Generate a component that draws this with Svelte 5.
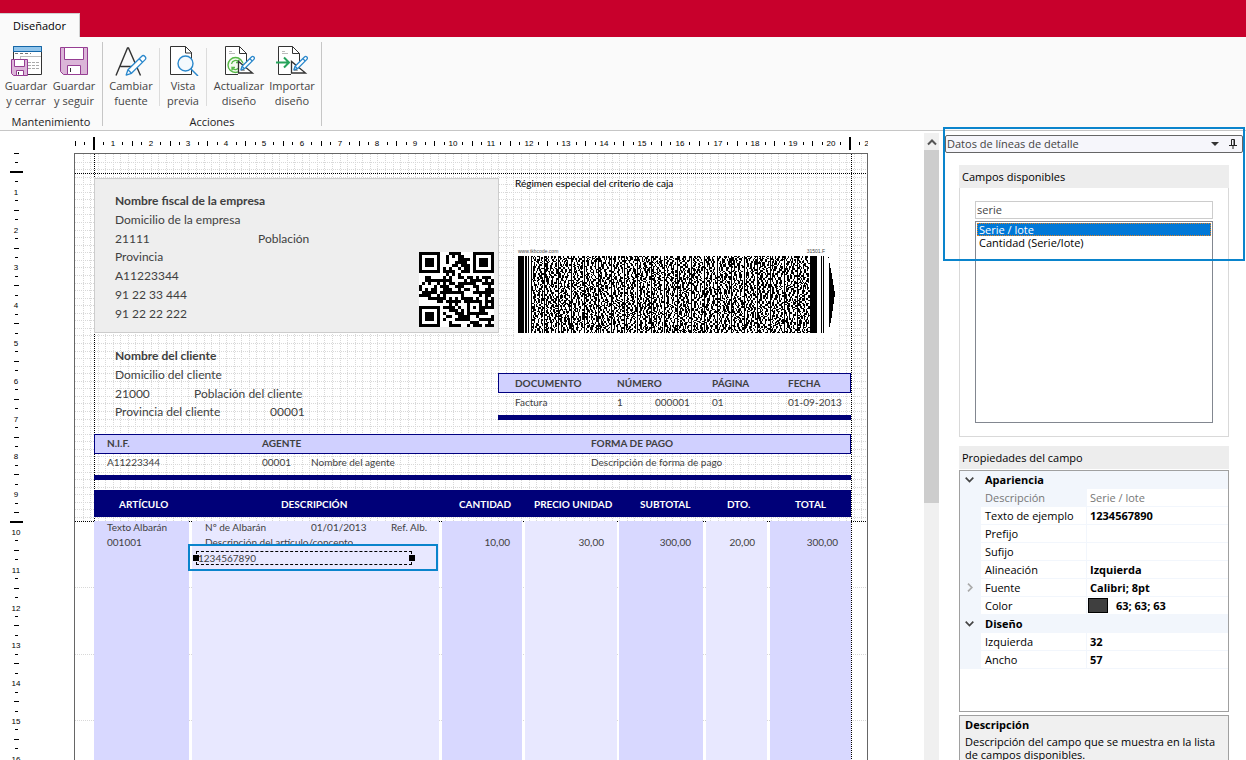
<script>
	const CM = 37.8;

	let section = $state('Datos de líneas de detalle');
	let search = $state('serie');
	let selected = $state(0);

	const available = ['Serie / lote', 'Cantidad (Serie/lote)'];

	const properties = [
		{ category: 'Apariencia' },
		{ name: 'Descripción', value: 'Serie / lote', readonly: true },
		{ name: 'Texto de ejemplo', value: '1234567890' },
		{ name: 'Prefijo', value: '' },
		{ name: 'Sufijo', value: '' },
		{ name: 'Alineación', value: 'Izquierda' },
		{ name: 'Fuente', value: 'Calibri; 8pt', expandable: true },
		{ name: 'Color', value: '63; 63; 63', color: 'rgb(63, 63, 63)' },
		{ category: 'Diseño' },
		{ name: 'Izquierda', value: '32' },
		{ name: 'Ancho', value: '57' }
	];

	// elementos del documento, en coordenadas de la hoja
	const shapes = [
		{ kind: 'box', x: 19, y: 24, w: 405, h: 155 },
		{ kind: 'band', x: 423, y: 219, w: 353, h: 20 },
		{ kind: 'bar', x: 423, y: 261, w: 353, h: 5 },
		{ kind: 'band', x: 19, y: 280, w: 757, h: 20 },
		{ kind: 'bar', x: 19, y: 321, w: 757, h: 5 },
		{ kind: 'bar', x: 19, y: 336, w: 757, h: 27 },
		{ kind: 'dark', x: 19, y: 367, w: 95, h: 600 },
		{ kind: 'light', x: 117, y: 367, w: 247, h: 600 },
		{ kind: 'dark', x: 367, y: 367, w: 80, h: 600 },
		{ kind: 'light', x: 450, y: 367, w: 92, h: 600 },
		{ kind: 'dark', x: 544, y: 367, w: 84, h: 600 },
		{ kind: 'light', x: 631, y: 367, w: 61, h: 600 },
		{ kind: 'dark', x: 695, y: 367, w: 81, h: 600 }
	];

	const fields = [
		{ x: 40, y: 39, text: 'Nombre fiscal de la empresa', kind: 'large strong' },
		{ x: 40, y: 58, text: 'Domicilio de la empresa', kind: 'large' },
		{ x: 40, y: 77, text: '21111', kind: 'large' },
		{ x: 183, y: 77, text: 'Población', kind: 'large' },
		{ x: 40, y: 95, text: 'Provincia', kind: 'large' },
		{ x: 40, y: 114, text: 'A11223344', kind: 'large' },
		{ x: 40, y: 133, text: '91 22 33 444', kind: 'large' },
		{ x: 40, y: 152, text: '91 22 22 222', kind: 'large' },
		{ x: 440, y: 21, text: 'Régimen especial del criterio de caja', kind: 'black' },
		{ x: 40, y: 194, text: 'Nombre del cliente', kind: 'large strong' },
		{ x: 40, y: 213, text: 'Domicilio del cliente', kind: 'large' },
		{ x: 40, y: 232, text: '21000', kind: 'large' },
		{ x: 119, y: 232, text: 'Población del cliente', kind: 'large' },
		{ x: 40, y: 250, text: 'Provincia del cliente', kind: 'large' },
		{ x: 195, y: 250, text: '00001', kind: 'large' },
		{ x: 440, y: 221, text: 'DOCUMENTO', kind: 'strong' },
		{ x: 542, y: 221, text: 'NÚMERO', kind: 'strong' },
		{ x: 637, y: 221, text: 'PÁGINA', kind: 'strong' },
		{ x: 713, y: 221, text: 'FECHA', kind: 'strong' },
		{ x: 440, y: 240, text: 'Factura' },
		{ x: 542, y: 240, text: '1' },
		{ x: 580, y: 240, text: '000001' },
		{ x: 637, y: 240, text: '01' },
		{ x: 713, y: 240, text: '01-09-2013' },
		{ x: 32, y: 281, text: 'N.I.F.', kind: 'strong' },
		{ x: 187, y: 281, text: 'AGENTE', kind: 'strong' },
		{ x: 516, y: 281, text: 'FORMA DE PAGO', kind: 'strong' },
		{ x: 32, y: 300, text: 'A11223344' },
		{ x: 187, y: 300, text: '00001' },
		{ x: 236, y: 300, text: 'Nombre del agente' },
		{ x: 516, y: 300, text: 'Descripción de forma de pago' },
		{ x: 44, y: 342, text: 'ARTÍCULO', kind: 'strong white' },
		{ x: 206, y: 342, text: 'DESCRIPCIÓN', kind: 'strong white' },
		{ x: 384, y: 342, text: 'CANTIDAD', kind: 'strong white' },
		{ x: 459, y: 342, text: 'PRECIO UNIDAD', kind: 'strong white' },
		{ x: 565, y: 342, text: 'SUBTOTAL', kind: 'strong white' },
		{ x: 652, y: 342, text: 'DTO.', kind: 'strong white' },
		{ x: 720, y: 342, text: 'TOTAL', kind: 'strong white' },
		{ x: 32, y: 365, text: 'Texto Albarán' },
		{ x: 32, y: 380, text: '001001' },
		{ x: 130, y: 365, text: 'Nº de Albarán' },
		{ x: 236, y: 365, text: '01/01/2013' },
		{ x: 316, y: 365, text: 'Ref. Alb.' },
		{ x: 130, y: 380, text: 'Descripción del artículo/concepto', kind: 'cut' },
		{ x: 375, y: 380, w: 60, text: '10,00' },
		{ x: 469, y: 380, w: 60, text: '30,00' },
		{ x: 556, y: 380, w: 60, text: '300,00' },
		{ x: 620, y: 380, w: 60, text: '20,00' },
		{ x: 703, y: 380, w: 60, text: '300,00' }
	];

	// reglas: una marca cada cuarto de centímetro, número en cada entero
	function ruler(count, margins) {
		const marks = [];
		for (let i = 0; i <= count; i++) {
			const pos = Math.round((i * CM) / 4);
			if (margins.includes(i)) marks.push({ pos, type: 'margin' });
			else if (i % 4 === 0 && i > 0) marks.push({ pos, type: 'label', label: i / 4 });
			else marks.push({ pos, type: i % 2 ? 'short' : 'tall' });
		}
		return marks;
	}
	const across = ruler(84, [2, 82]);
	const down = ruler(66, [2, 39]);
	const half = { short: 1, tall: 2, margin: 6 };

	const gridX = Array.from({ length: 104 }, (_, i) => Math.round((i + 1) * 7.56));
	const gridY = Array.from({ length: 48 }, (_, i) => Math.round((i + 1) * 7.56));
	const bandY = [433, 500, 566];

	// mulberry32
	function random(seed) {
		return () => {
			seed = (seed + 0x6d2b79f5) | 0;
			let t = Math.imul(seed ^ (seed >>> 15), 1 | seed);
			t = (t + Math.imul(t ^ (t >>> 7), 61 | t)) ^ t;
			return ((t ^ (t >>> 14)) >>> 0) / 4294967296;
		};
	}

	function qrPath() {
		const rnd = random(77);
		const finder = (r, c) => {
			const ring = Math.max(Math.abs(r - 3), Math.abs(c - 3));
			return ring === 3 || ring < 2;
		};
		let d = '';
		for (let r = 0; r < 25; r++) {
			for (let c = 0; c < 25; c++) {
				let on = rnd() > 0.47;
				if (r < 8 && c < 8) on = finder(r, c);
				else if (r < 8 && c > 16) on = finder(r, c - 18);
				else if (r > 16 && c < 8) on = finder(r - 18, c);
				else if (r > 15 && r < 21 && c > 15 && c < 21) {
					on = Math.max(Math.abs(r - 18), Math.abs(c - 18)) !== 1;
				}
				if (on) d += `M${c} ${r}h1v1h-1z`;
			}
		}
		return d;
	}

	function barcodePath() {
		const rnd = random(1501);
		let d = 'M0 0h6v77h-6zM7 0h2v77h-2zM10 0h1v77h-1zM292 0h7v77h-7zM303 0h1v77h-1zM305 0h1v77h-1z';
		for (let i = 0; i < 21; i++) {
			const col = 13 + Math.round(i * 13.3);
			const next = 13 + Math.round((i + 1) * 13.3);
			d += `M${col} 0h1v77h-1z`;
			for (let y = 0; y < 77; y++) {
				let x = col + 1 + Math.floor(rnd() * 3);
				const h = rnd() > 0.5 && y < 76 ? 2 : 1;
				while (x < next - 1) {
					const w = Math.min(1 + Math.floor(rnd() * 2.6), next - x);
					d += `M${x} ${y}h${w}v${h}h-${w}z`;
					x += w + 1 + Math.floor(rnd() * 3);
				}
				y += h - 1;
			}
		}
		return d;
	}
</script>

{#snippet pencil(x, y, size)}
	<g transform="translate({x} {y}) scale({size})" fill="#fff" stroke="#2b88cc" stroke-width={1.3 / size} stroke-linejoin="round">
		<path d="M2.500 12.500 14 1.200a2 2 0 0 1 2.900 2.900L5.500 15.500 1 17z" />
		<path d="M12 3.200l2.900 2.900M2.500 12.500l3 3" />
	</g>
{/snippet}

{#snippet sheet()}
	<path d="M2.500 2.500h14l7 7v21h-21z" fill="#fff" stroke="#333" />
	<path d="M16.500 2.500v7h7" fill="none" stroke="#333" />
{/snippet}

{#snippet square()}
	<path d="M15 17h2l14 12v3H15z" fill="#fafafa" />
	<path d="M15.500 17.500v11.500h14z" fill="#fff" stroke="#333" stroke-width="1.300" />
	<path d="M18 23v3.500h4z" fill="#333" />
	{@render pencil(17, 12, 0.82)}
{/snippet}

<div class="app">
	<header>
		<button class="tab">Diseñador</button>
	</header>

	<div class="ribbon">
		<section class="group">
			<div class="tools">
				<button class="tool">
					<svg width="32" height="32" viewBox="0 0 32 32">
						<path d="M3.500 2.500h28v28h-28z" fill="#fff" stroke="#333" />
						<path d="M3.500 2.500h28v5h-28z" fill="#92c5eb" stroke="#1467a8" />
						<path d="M10 12.500h21M10.500 13v3" stroke="#bbb" />
						<path d="M5 9.500h16" stroke="#777" stroke-dasharray="3 2" />
						<path d="M18 18.500h12M18 21.500h12M18 24.500h12" stroke="#aaa" stroke-dasharray="3 1" />
						<path d="M1.500 15.500h16v16h-14l-2-2z" fill="#dbb5d8" stroke="#963e93" />
						<path d="M4.500 15.500h10v7h-10zM6.500 26.500h7v5h-7z" fill="#fff" stroke="#963e93" />
						<path d="M8.500 28v2.500" stroke="#333" />
					</svg>
					<span>Guardar</span><span>y cerrar</span>
				</button>
				<button class="tool">
					<svg width="32" height="32" viewBox="0 0 32 32">
						<path d="M2.500 3.500h27v27h-24l-3-3z" fill="#dbb5d8" stroke="#963e93" />
						<path d="M6.500 3.500h19v12h-19zM9.500 21.500h13v9h-13z" fill="#fff" stroke="#963e93" />
						<path d="M12.500 24v4" stroke="#333" />
					</svg>
					<span>Guardar</span><span>y seguir</span>
				</button>
			</div>
			<h2>Mantenimiento</h2>
		</section>
		<section class="group wide">
			<div class="tools">
				<button class="tool">
					<svg width="32" height="32" viewBox="0 0 32 32">
						<path d="M1 31.500 12.500 4h1L25.500 31.500M5.500 22.500h16" fill="none" stroke="#333" stroke-width="1.400" />
						{@render pencil(10, 11, 1.18)}
					</svg>
					<span>Cambiar</span><span>fuente</span>
				</button>
				<i class="line"></i>
				<button class="tool narrow">
					<svg width="32" height="32" viewBox="0 0 32 32">
						<path d="M3.500 2.500h15l6 6v22h-21z" fill="#fff" stroke="#333" />
						<path d="M18.500 2.500v6.500h6.500" fill="none" stroke="#333" />
						<circle cx="18.500" cy="19.500" r="7.500" fill="#f4f9fd" stroke="#2b88cc" stroke-width="1.400" />
						<path d="M24 25l7 7" stroke="#2b88cc" stroke-width="1.500" />
					</svg>
					<span>Vista</span><span>previa</span>
				</button>
				<i class="line"></i>
				<button class="tool big">
					<svg width="32" height="32" viewBox="0 0 32 32">
						{@render sheet()}
						<path d="M6 7.500h3M6 9.500h6" stroke="#bbb" />
						<circle cx="12.500" cy="21" r="7.500" fill="#f3faef" stroke="#57b947" stroke-width="1.400" />
						<path d="M8.500 20a4.300 4.300 0 0 1 7.500-2v-2.500m0 3h-3M16.500 22a4.300 4.300 0 0 1-7.500 2v2.500m0-3h3" fill="none" stroke="#57b947" stroke-width="1.300" />
						{@render square()}
					</svg>
					<span>Actualizar</span><span>diseño</span>
				</button>
				<button class="tool">
					<svg width="32" height="32" viewBox="0 0 32 32">
						{@render sheet()}
						<path d="M6 7.500h3M6 9.500h6" stroke="#bbb" />
						<path d="M0 18.500h13M8 13.500l5 5-5 5" fill="none" stroke="#27a35b" stroke-width="2" />
						{@render square()}
					</svg>
					<span>Importar</span><span>diseño</span>
				</button>
			</div>
			<h2>Acciones</h2>
		</section>
	</div>

	<main>
		<div class="designer">
			<svg class="hruler" height="22">
				{#each across as m}
					{#if m.type === 'label'}
						<text x={m.pos + 1} y="15">{m.label}</text>
					{:else}
						<line x1={m.pos + 1} x2={m.pos + 1} y1={12 - half[m.type]} y2={12 + half[m.type] + 1} class:thick={m.type === 'margin'} />
					{/if}
				{/each}
			</svg>
			<svg class="vruler" width="74">
				{#each down as m}
					{#if m.type === 'label'}
						<text x="16" y={m.pos + 4}>{m.label}</text>
					{:else}
						<line x1={16 - half[m.type]} x2={17 + half[m.type]} y1={m.pos} y2={m.pos} class:thick={m.type === 'margin'} />
					{/if}
				{/each}
			</svg>

			<div class="sheet">
				<svg class="grid" width="792" height="1000">
					{#each gridX as x}
						<line x1={x} x2={x} y1="0" y2="367" />
					{/each}
					{#each gridY as y}
						<line x1="0" x2="792" y1={y} y2={y} />
					{/each}
					{#each bandY as y}
						<line x1="0" x2="792" y1={y} y2={y} />
					{/each}
					<g class="guides">
						<line x1="0" x2="792" y1="19" y2="19" />
						<line x1="0" x2="792" y1="367" y2="367" />
						<line x1="19" x2="19" y1="0" y2="367" />
					</g>
				</svg>

				{#each shapes as s}
					<div class="shape {s.kind}" style="left:{s.x}px; top:{s.y}px; width:{s.w}px; height:{s.h}px"></div>
				{/each}

				<svg class="grid" width="792" height="1000">
					<g class="guides"><line x1="776" x2="776" y1="0" y2="1000" /></g>
				</svg>

				<svg class="qr" width="75" height="75" viewBox="0 0 25 25"><path d={qrPath()} /></svg>

				<div class="barcode">
					<div class="captions"><span>www.tkbcode.com</span><span>31501.F</span></div>
					<svg width="320" height="77" viewBox="0 0 320 77">
						<path d={barcodePath()} />
						<path d="M311 7h1v5h1v5h1v6h1v6h1v6h1v6h-1v7h-1v7h-1v7h-1v5h-1v4h-1zM310 1h1v1h-1z" />
					</svg>
				</div>

				{#each fields as f}
					<div class="field {f.kind ?? ''}" class:right={f.w} style="left:{f.x}px; top:{f.y}px; width:{f.w ? f.w + 'px' : 'auto'}">{f.text}</div>
				{/each}

				<div class="highlight">
					<div class="selection">1234567890</div>
				</div>
			</div>
		</div>

		<div class="scrollbar">
			<button aria-label="Subir">
				<svg width="10" height="8" viewBox="0 0 10 8"><path d="M1 6.500l4-4 4 4" fill="none" stroke="#555" stroke-width="2" /></svg>
			</button>
			<div class="thumb"></div>
		</div>

		<aside>
			<div class="dock">
				<select bind:value={section} aria-label="Sección">
					<option>Datos de líneas de detalle</option>
				</select>
				<svg width="8" height="4" viewBox="0 0 8 4"><path d="M0 0h8l-4 4z" fill="#333" /></svg>
				<button aria-label="Fijar panel">
					<svg width="8" height="10" viewBox="0 0 8 10"><path d="M2.500 6V.5h3V6M5 1v5M0 6.500h8M4 7v3" fill="none" stroke="#222" /></svg>
				</button>
			</div>

			<h3>Campos disponibles</h3>
			<div class="frame">
				<input type="text" bind:value={search} aria-label="Buscar campo" />
				<ul role="listbox" aria-label="Campos disponibles">
					{#each available as name, i}
						<li role="none">
							<button role="option" aria-selected={selected === i} class:active={selected === i} onclick={() => (selected = i)}>{name}</button>
						</li>
					{/each}
				</ul>
			</div>

			<h3 class="second">Propiedades del campo</h3>
			<div class="props">
				<table>
					<colgroup>
						<col class="gutter" />
						<col class="name" />
						<col />
					</colgroup>
					<tbody>
						{#each properties as p}
							{#if p.category}
								<tr class="category">
									<td><button aria-label="Contraer"><svg width="9" height="6" viewBox="0 0 9 6"><path d="M.7.7l3.800 3.800L8.300.7" fill="none" stroke="#444" stroke-width="1.700" /></svg></button></td>
									<th colspan="2">{p.category}</th>
								</tr>
							{:else}
								<tr class:readonly={p.readonly}>
									<td>
										{#if p.expandable}
											<button aria-label="Expandir"><svg width="6" height="9" viewBox="0 0 6 9"><path d="M1 .7l3.800 3.800L1 8.300" fill="none" stroke="#aaa" stroke-width="1.700" /></svg></button>
										{/if}
									</td>
									<th>{p.name}</th>
									<td>
										<span class="value">
											{#if p.color}<i style="background:{p.color}"></i>{/if}{p.value}
										</span>
									</td>
								</tr>
							{/if}
						{/each}
					</tbody>
				</table>
			</div>

			<div class="help">
				<strong>Descripción</strong>
				<p>Descripción del campo que se muestra en la lista de campos disponibles.</p>
			</div>

			<div class="callout"></div>
		</aside>
	</main>
</div>

<style>
	:global(body) {
		margin: 0;
		background: #fff;
	}

	.app {
		display: flex;
		flex-direction: column;
		height: 100vh;
		overflow: hidden;
		font-family: 'Open Sans', sans-serif;
		font-size: 11px;
		line-height: 15px;
		color: #000;
	}

	button {
		margin: 0;
		padding: 0;
		border: 0;
		background: none;
		font: inherit;
		color: inherit;
	}

	h2, h3, p, ul {
		margin: 0;
		padding: 0;
		font-size: inherit;
		font-weight: normal;
	}

	svg {
		display: block;
		flex: none;
	}

	header {
		display: flex;
		align-items: flex-end;
		height: 37px;
		background: #c8002c;
	}

	.tab {
		width: 80px;
		height: 24px;
		background: #fafafa;
		border-top: 1px solid #d0d0d0;
		border-right: 1px solid #d0d0d0;
	}

	.ribbon {
		display: flex;
		height: 88px;
		padding-top: 5px;
		background: #fafafa;
		border-bottom: 1px solid #c6c6c6;
	}

	.group {
		display: flex;
		flex-direction: column;
		width: 102px;
		height: 84px;
		border-right: 1px solid #c6c6c6;
	}

	.group.wide {
		width: 218px;
	}

	.group h2 {
		margin-top: 6px;
		text-align: center;
		color: #222;
	}

	.tools {
		display: flex;
		padding: 2px 0 0 2px;
	}

	.wide .tools {
		padding-left: 0;
	}

	.tool {
		display: flex;
		flex-direction: column;
		align-items: center;
		width: 48px;
		color: #444;
	}

	.tool svg {
		margin-bottom: 2px;
	}

	.wide .tool {
		width: 56px;
	}

	.wide .tool.narrow {
		width: 46px;
	}

	.wide .tool.big {
		width: 64px;
	}

	.wide .tool:last-child {
		width: 42px;
	}

	.line {
		width: 1px;
		height: 58px;
		margin-top: 4px;
		background: #dcdcdc;
	}

	main {
		flex: 1;
		display: flex;
		min-height: 0;
	}

	.designer {
		flex: 1;
		display: grid;
		grid-template-columns: 74px 794px;
		grid-template-rows: 22px 1fr;
		min-width: 0;
		overflow: hidden;
	}

	.hruler {
		grid-column: 2;
		width: 100%;
	}

	.vruler {
		height: 100%;
	}

	.hruler text, .vruler text {
		font-family: 'Liberation Sans', sans-serif;
		font-size: 8px;
		text-anchor: middle;
	}

	.hruler line, .vruler line {
		stroke: #000;
		stroke-width: 1;
		shape-rendering: crispEdges;
	}

	.hruler .thick, .vruler .thick {
		stroke-width: 2;
	}

	.sheet {
		position: relative;
		overflow: hidden;
		border: 1px solid #666;
		border-bottom: 0;
		font-family: Lato, sans-serif;
		font-size: 10px;
	}

	.grid {
		position: absolute;
		left: 0;
		top: 0;
	}

	.grid line {
		stroke: #d8d8d8;
		stroke-dasharray: 1 1;
		shape-rendering: crispEdges;
	}

	.grid .guides line {
		stroke: #000;
	}

	.shape {
		position: absolute;
		box-sizing: border-box;
	}

	.box {
		background: #eee;
		border: 1px solid #ccc;
	}

	.band {
		background: #d0d0ff;
		border: 1px solid #000080;
	}

	.bar {
		background: #000078;
	}

	.dark {
		background: #d8d8ff;
	}

	.light {
		background: #e8e8ff;
	}

	.qr {
		position: absolute;
		left: 344px;
		top: 98px;
		background: #fff;
		shape-rendering: crispEdges;
	}

	.barcode {
		position: absolute;
		left: 440px;
		top: 91px;
		padding: 2px 0 4px 3px;
		background: #fff;
		shape-rendering: crispEdges;
	}

	.captions {
		display: flex;
		justify-content: space-between;
		width: 307px;
		font: 5px/9px 'Liberation Sans', sans-serif;
		color: #444;
	}

	.field {
		position: absolute;
		line-height: 16px;
		white-space: nowrap;
		color: #3f3f3f;
	}

	.large {
		font-size: 12px;
	}

	.strong {
		font-weight: bold;
	}

	.black {
		color: #000;
	}

	.white {
		color: #fff;
	}

	.right {
		text-align: right;
	}

	.cut {
		height: 11px;
		overflow: hidden;
	}

	.highlight {
		position: absolute;
		left: 113px;
		top: 390px;
		box-sizing: border-box;
		width: 250px;
		height: 27px;
		padding: 5px 6px;
		border: 2px solid #0a84cc;
	}

	.selection {
		position: relative;
		width: 213px;
		border: 1px dashed #000;
		padding-left: 1px;
		line-height: 12px;
		color: #3f3f3f;
	}

	.selection::before, .selection::after {
		content: '';
		position: absolute;
		top: 3px;
		width: 6px;
		height: 6px;
		background: #000;
	}

	.selection::before {
		left: -4px;
	}

	.selection::after {
		right: -4px;
	}

	.scrollbar {
		display: flex;
		flex-direction: column;
		width: 15px;
		margin-top: 2px;
		background: #f0f0f0;
	}

	.scrollbar button {
		display: flex;
		align-items: center;
		justify-content: center;
		height: 17px;
	}

	.thumb {
		height: 353px;
		background: #cdcdcd;
	}

	aside {
		position: relative;
		display: flex;
		flex-direction: column;
		width: 298px;
		margin: 4px 3px 0 6px;
	}

	.dock {
		display: flex;
		align-items: center;
		flex: none;
		box-sizing: border-box;
		height: 18px;
		padding: 0 5px 1px 0;
		background: #f6f6fb;
		border: 1px solid #666;
		border-radius: 2px;
	}

	.dock select {
		appearance: none;
		flex: 1;
		padding: 0 1px;
		border: 0;
		background: none;
		font: inherit;
		color: #444;
	}

	.dock button {
		margin-left: 10px;
	}

	h3 {
		flex: none;
		margin: 12px 14px 0;
		padding-left: 3px;
		line-height: 23px;
		background: #ededed;
	}

	h3.second {
		margin-top: 9px;
	}

	.frame {
		flex: none;
		margin: 0 14px;
		padding: 13px 15px;
		border: 1px solid #d9d9d9;
		border-top: 0;
	}

	.frame input {
		display: block;
		box-sizing: border-box;
		width: 100%;
		height: 18px;
		padding: 0 1px 1px;
		border: 1px solid #ccc;
		font: inherit;
		color: #444;
		outline: 0;
	}

	.frame ul {
		box-sizing: border-box;
		height: 202px;
		margin-top: 2px;
		padding: 1px;
		list-style: none;
		border: 1px solid #828790;
	}

	.frame li button {
		display: block;
		width: 100%;
		padding-left: 2px;
		line-height: 13px;
		text-align: left;
	}

	.frame li .active {
		background: #0078d7;
		color: #fff;
		outline: 1px dotted #e08020;
		outline-offset: -1px;
	}

	.props {
		flex: none;
		box-sizing: border-box;
		height: 242px;
		margin: 1px 14px 0;
		border: 1px solid #a0a0a0;
	}

	table {
		width: 100%;
		border-collapse: collapse;
		table-layout: fixed;
	}

	.gutter {
		width: 21px;
	}

	.name {
		width: 105px;
	}

	td, th {
		height: 17px;
		padding: 0;
		line-height: 17px;
		font-weight: normal;
		text-align: left;
		border-bottom: 1px solid #f2f6fc;
	}

	td:first-child {
		background: #f2f6fc;
	}

	td button {
		display: flex;
		justify-content: center;
		width: 19px;
	}

	th {
		padding-left: 4px;
	}

	.category th {
		font-weight: bold;
		background: #f2f6fc;
	}

	.value {
		display: flex;
		align-items: center;
		height: 17px;
		padding-left: 3px;
		font-weight: bold;
		border-left: 1px solid #f2f6fc;
	}

	.value i {
		width: 18px;
		height: 13px;
		margin: 0 8px 0 -2px;
		border: 1px solid #000;
	}

	.readonly th, .readonly .value {
		font-weight: normal;
		color: #777;
	}

	.readonly th {
		background: #f2f6fc;
	}

	.help {
		flex: none;
		margin: 3px 14px 0;
		padding: 1px 5px 8px;
		background: #f0f0f0;
		border: 1px solid #a0a0a0;
	}

	.help p {
		margin-top: 3px;
		line-height: 13px;
	}

	.callout {
		position: absolute;
		inset: -8px -2px auto -2px;
		box-sizing: border-box;
		height: 134px;
		border: 2px solid #0a84cc;
		pointer-events: none;
	}
</style>
